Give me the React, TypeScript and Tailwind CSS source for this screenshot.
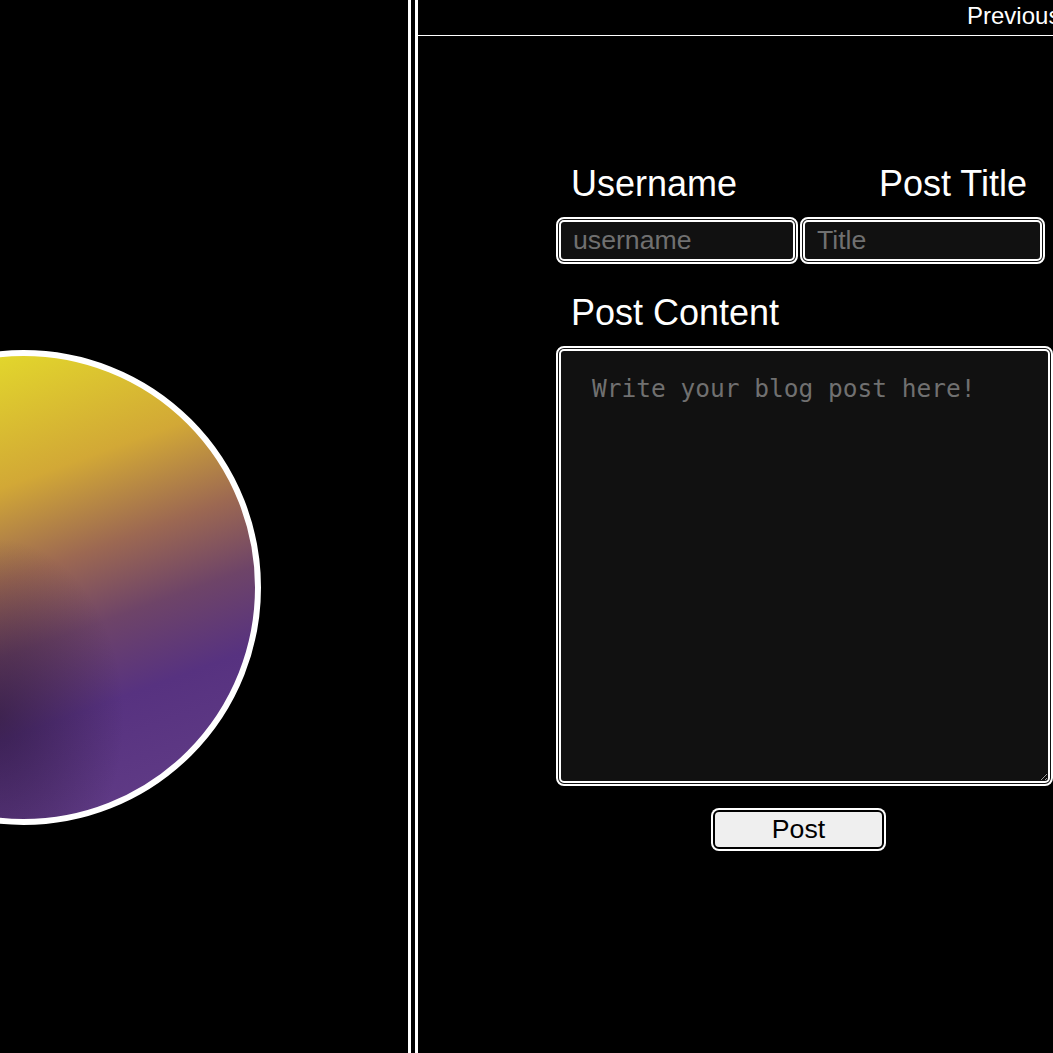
export default function App() {
    return (
        <div className="flex h-[1053px] w-full overflow-hidden bg-black font-['Liberation_Sans',Arial,sans-serif] text-white">
            <aside className="flex w-[411px] shrink-0 flex-col border-r-[3px] border-white">
                <div className="ml-[-214px] mt-[350px] h-[475px] w-[475px] shrink-0 rounded-full border-[6px] border-white bg-[radial-gradient(ellipse_at_44%_78%,rgba(35,18,45,0.55),transparent_35%),linear-gradient(160deg,#e2d62c_12%,#d2a836_33%,#9c6852_48%,#6e4468_60%,#573280_73%,#5f3a85_90%)]" />
            </aside>

            <main className="ml-[4px] flex w-[800px] shrink-0 flex-col border-l-[3px] border-white">
                <header className="h-[36px] border-b border-white pl-[549px] pt-[4px] text-[24px] leading-[24px]">
                    Previous
                </header>

                <form className="ml-[138px] mt-[128px] flex w-[489px] flex-col" onSubmit={(e) => e.preventDefault()}>
                    <div className="flex justify-between text-[36px] leading-[40px]">
                        <label htmlFor="username" className="pl-[15px]">Username</label>
                        <label htmlFor="title" className="pr-[18px]">Post Title</label>
                    </div>

                    <div className="mt-[13px] flex gap-[2px]">
                        <input
                            id="username"
                            placeholder="username"
                            className="h-[47px] w-[242px] rounded-[8px] border-[5px] border-double border-white bg-[#111111] px-[12px] text-[26.67px] text-white outline-none placeholder:text-[#707070]"
                        />
                        <input
                            id="title"
                            placeholder="Title"
                            className="h-[47px] w-[245px] rounded-[8px] border-[5px] border-double border-white bg-[#111111] px-[12px] text-[26.67px] text-white outline-none placeholder:text-[#707070]"
                        />
                    </div>

                    <label htmlFor="content" className="mt-[29px] pl-[15px] text-[36px] leading-[40px]">
                        Post Content
                    </label>
                    <textarea
                        id="content"
                        placeholder="Write your blog post here!"
                        className="mt-[13px] h-[440px] w-[497px] rounded-[8px] border-[5px] border-double border-white bg-[#111111] px-[31px] pt-[20px] font-['DejaVu_Sans_Mono',monospace] text-[24.5px] text-white outline-none placeholder:text-[#707070]"
                    />

                    <button
                        type="submit"
                        className="ml-[157px] mt-[24px] h-[39px] w-[171px] self-start rounded-[6px] border-2 border-black bg-[#efefef] text-[26.67px] leading-none text-black shadow-[0_0_0_2px_#fff]"
                    >
                        Post
                    </button>
                </form>
            </main>
        </div>
    );
}
